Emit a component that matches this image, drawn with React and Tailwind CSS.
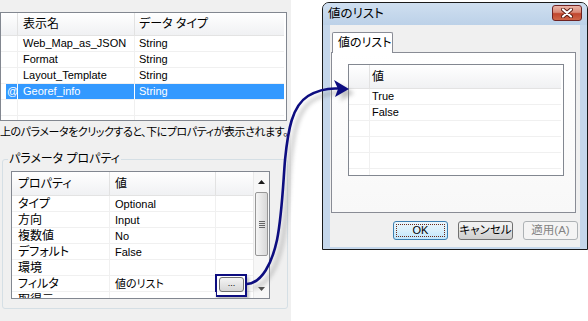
function Tri({ down }) {
  return (
    <svg width="7" height="4" viewBox="0 0 7 4">
      {down ? <polygon points="0,0 7,0 3.5,4" fill="#4d4d4d" /> : <polygon points="0,4 7,4 3.5,0" fill="#1a1a1a" />}
    </svg>
  );
}

function TopTable() {
  const rows = [
    ["", "Web_Map_as_JSON", "String", false],
    ["", "Format", "String", false],
    ["", "Layout_Template", "String", false],
    ["@", "Georef_info", "String", true],
    ["", "", "", false],
    ["", "", "", false],
  ];
  return (
    <div className="w-[287px] h-[109px] border border-[#828790] bg-white overflow-hidden">
      <div className="flex w-[283px] h-[23px] bg-gradient-to-b from-white to-[#f0f1f3] border-b border-[#e3e3e3]">
        <div className="w-[16px] h-full" />
        <div className="w-[117px] h-full border-l border-[#e2e2e2] pl-[5px] flex items-center">表示名</div>
        <div className="w-[150px] h-full border-l border-[#e2e2e2] pl-[4px] flex items-center">データ タイプ</div>
      </div>
      {rows.map((r, i) => (
        <div key={i} className="flex w-[283px] h-[16px] border-b border-[#f0f0f0] text-[11px] leading-[15px]">
          <div className="w-[16px] h-full pl-[5px]">
            <div className={`h-full pl-[1px] ${r[3] ? "bg-[#3399ff] text-white" : ""}`}>{r[0]}</div>
          </div>
          <div className={`w-[117px] h-full border-l ${r[3] ? "border-white bg-[#3399ff] text-white" : "border-[#f0f0f0]"} pl-[5px]`}>{r[1]}</div>
          <div className={`w-[150px] h-full border-l ${r[3] ? "border-white bg-[#3399ff] text-white" : "border-[#f0f0f0]"} pl-[4px]`}>{r[2]}</div>
        </div>
      ))}
    </div>
  );
}

function PropTable() {
  const rows = [
    ["タイプ", "Optional"],
    ["方向", "Input"],
    ["複数値", "No"],
    ["デフォルト", "False"],
    ["環境", ""],
    ["フィルタ", "値のリスト", true],
    ["取得元", ""],
  ];
  return (
    <div className="ml-[8px] mt-[5px] w-[259px] h-[128px] border border-[#828790] bg-white flex overflow-hidden">
      <div className="w-[241px] flex flex-col">
        <div className="flex h-[24px] shrink-0 bg-gradient-to-b from-white to-[#f0f1f3] border-b border-[#e3e3e3]">
          <div className="w-[97px] h-full pl-[6px] flex items-center">プロパティ</div>
          <div className="w-[106px] h-full border-l border-[#e2e2e2] pl-[5px] flex items-center">値</div>
          <div className="w-[38px] h-full border-l border-[#e2e2e2]" />
        </div>
        {rows.map((r, i) => (
          <div key={i} className="flex h-[16px] shrink-0 border-b border-[#f0f0f0] leading-[16px]">
            <div className="w-[97px] h-full pl-[6px] overflow-hidden">{r[0]}</div>
            <div className="w-[106px] h-full border-l border-[#f0f0f0] pl-[5px] text-[11px]">{r[1]}</div>
            <div className="relative w-[38px] h-full border-l border-[#f0f0f0]">
              {r[2] && (
                <>
                  <div className="ml-[3px] mt-[1px] w-[25px] h-[15px] rounded-[3px] border border-[#707070] bg-gradient-to-b from-[#f4f4f4] to-[#d6d6d6] flex items-center justify-center text-[9px] leading-none pb-[3px]">...</div>
                  <div className="absolute left-[-1px] top-[-2px] w-[32px] h-[23px] border-2 border-[#0d0d80] shadow-[2px_3px_3px_rgba(0,0,0,0.25)]" />
                </>
              )}
            </div>
          </div>
        ))}
      </div>
      <div className="w-[16px] h-full flex flex-col bg-[#f7f7f7] border-l border-[#eaeaea]">
        <div className="h-[19px] flex items-center justify-center"><Tri /></div>
        <div className="mt-[1px] mx-[1px] h-[64px] rounded-[2px] border border-[#979797] bg-gradient-to-r from-[#f5f5f5] to-[#d8d8d8] flex flex-col items-center justify-center gap-[1px]">
          <div className="w-[6px] h-px bg-[#666]" />
          <div className="w-[6px] h-px bg-[#666]" />
          <div className="w-[6px] h-px bg-[#666]" />
          <div className="w-[6px] h-px bg-[#666]" />
        </div>
        <div className="flex-1" />
        <div className="h-[18px] flex items-center justify-center"><Tri down /></div>
      </div>
    </div>
  );
}

function LeftPanel() {
  return (
    <div className="w-[291px] h-[321px] shrink-0 bg-[#f0f0f0] pt-[12px] flex flex-col">
      <TopTable />
      <div className="mt-[3px] h-[16px] leading-[16px] whitespace-nowrap text-[11px] tracking-[-0.45px]">上のパラメータをクリックすると、下にプロパティが表示されます。</div>
      <fieldset className="mt-[12px] ml-[2px] w-[286px] h-[157px] border border-[#d5dfe5] rounded-[3px]">
        <legend className="ml-[5px] px-[1px] leading-[14px]">パラメータ プロパティ</legend>
        <PropTable />
      </fieldset>
    </div>
  );
}

function Dialog() {
  const rows = ["True", "False", "", "", "", ""];
  return (
    <div className="ml-[31px] mt-[2px] w-[266px] h-[248px] shrink-0 border border-[#1a1a1a] rounded-t-[7px] bg-[#c5d7eb] flex flex-col overflow-hidden">
      <div className="h-[22px] shrink-0 bg-gradient-to-b from-[#cfdff0] to-[#bcd1e8] flex items-start justify-between">
        <div className="pl-[5px] pt-[4px] text-[12.5px] leading-[15px]">値のリスト</div>
        <div className="mt-[2px] mr-[5px] w-[30px] h-[16px] rounded-[3px] border border-[#6e2222] bg-[linear-gradient(180deg,#ecb5a9_0%,#d98a78_45%,#c0452d_55%,#cf6648_100%)] flex items-center justify-center">
          <svg width="12" height="10" viewBox="0 0 12 10">
            <path d="M2 1.5 L10 8.5 M10 1.5 L2 8.5" stroke="#5a1c12" strokeWidth="4" strokeLinecap="round" />
            <path d="M2 1.5 L10 8.5 M10 1.5 L2 8.5" stroke="#ffffff" strokeWidth="2.2" strokeLinecap="round" />
          </svg>
        </div>
      </div>
      <div className="flex-1 mx-[7px] mb-[2px] bg-[#f0f0f0] pt-[7px] pl-[1px] pr-[4px] flex flex-col">
        <div className="ml-[1px] w-[61px] h-[21px] -mb-px relative z-10 border border-b-0 border-[#898c95] rounded-t-[2px] bg-white pl-[5px] leading-[20px] whitespace-nowrap">値のリスト</div>
        <div className="h-[161px] border border-[#898c95] bg-gradient-to-b from-white to-[#f8f8f8] pt-[11px] pl-[16px]">
          <div className="w-[216px] h-[112px] border border-[#828790] bg-white overflow-hidden">
            <div className="flex w-[212px] h-[24px] bg-gradient-to-b from-white to-[#f0f1f3] border-b border-[#e3e3e3]">
              <div className="w-[20px] h-full" />
              <div className="flex-1 h-full border-l border-[#e2e2e2] pl-[2px] flex items-center">値</div>
            </div>
            {rows.map((r, i) => (
              <div key={i} className="flex w-[212px] h-[16px] border-b border-[#f0f0f0] text-[11px] leading-[15px]">
                <div className="w-[20px] h-full" />
                <div className="flex-1 h-full border-l border-[#f0f0f0] pl-[2px]">{r}</div>
              </div>
            ))}
          </div>
        </div>
        <div className="mt-[8px] -mr-[2px] flex justify-end gap-[10px]">
          <div className="w-[55px] h-[19px] rounded-[3px] border border-[#3c7fb1] bg-gradient-to-b from-[#eaf6fd] via-[#d9f0fc] to-[#bee6fd] p-[2px]">
            <div className="h-full border border-dotted border-[#6b2a1a] flex items-center justify-center text-[11px] leading-none">OK</div>
          </div>
          <div className="w-[55px] h-[19px] rounded-[3px] border border-[#707070] bg-[linear-gradient(180deg,#f2f2f2_0%,#ebebeb_50%,#dddddd_50%,#cfcfcf_100%)] flex items-center justify-center text-[11.5px] leading-none whitespace-nowrap">キャンセル</div>
          <div className="w-[55px] h-[19px] rounded-[3px] border border-[#adb2b5] bg-[#f4f4f4] flex items-center justify-center text-[11.5px] leading-none text-[#838383] whitespace-nowrap">適用(A)</div>
        </div>
      </div>
    </div>
  );
}

function Arrow() {
  const d = "M247 284 C262 283 272 263 277 240 C282 215 283 185 285 160 C288 130 292 106 308 96 C318 90 328 88 338 88.5";
  return (
    <svg className="absolute inset-0 pointer-events-none" width="588" height="321" viewBox="0 0 588 321">
      <defs>
        <filter id="blur" x="-20%" y="-20%" width="140%" height="140%">
          <feGaussianBlur stdDeviation="2" />
        </filter>
      </defs>
      <g filter="url(#blur)" opacity="0.45" transform="translate(5 4)">
        <path d={d} stroke="#777" strokeWidth="3" fill="none" />
        <polygon points="349,89 334,80 338,89 335,97" fill="#777" />
      </g>
      <path d={d} stroke="#0d0d80" strokeWidth="2.6" fill="none" />
      <polygon points="349,89 334,80 338,89 335,97" fill="#0d0d80" />
    </svg>
  );
}

export default function App() {
  return (
    <div className="relative w-[588px] h-[321px] overflow-hidden bg-white text-black font-['Liberation_Sans','Noto_Sans_CJK_JP',sans-serif] [font-feature-settings:'palt'] text-[12px] flex items-start">
      <LeftPanel />
      <Dialog />
      <Arrow />
    </div>
  );
}
